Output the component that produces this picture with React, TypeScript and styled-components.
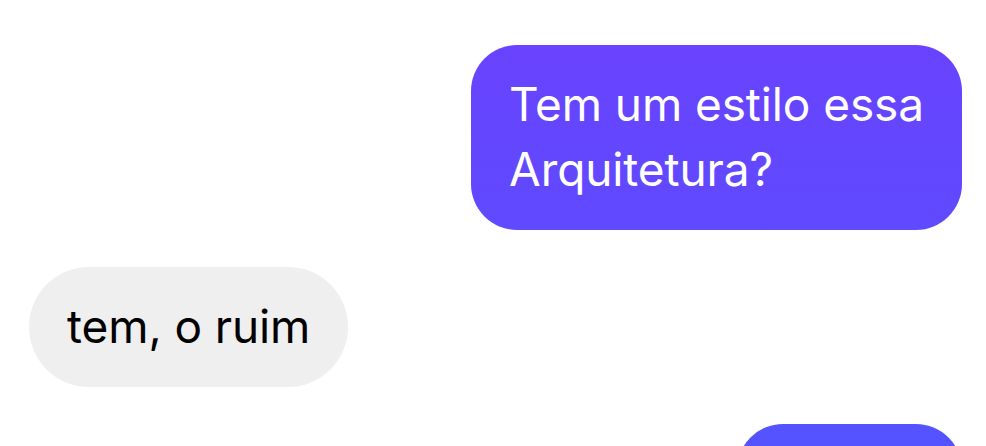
import styled, { createGlobalStyle } from "styled-components";

const GlobalStyle = createGlobalStyle`
  html, body {
    margin: 0;
    padding: 0;
    background: #ffffff;
    overflow: hidden;
  }
  body {
    font-family: "Inter", "Noto Sans", sans-serif;
  }
`;

const Thread = styled.div`
  display: flex;
  flex-direction: column;
  row-gap: 37px;
  padding: 45px 24px 0 29px;
  height: 446px;
  box-sizing: border-box;
  overflow: hidden;
`;

const Row = styled.div<{ $mine?: boolean }>`
  display: flex;
  justify-content: ${({ $mine }) => ($mine ? "flex-end" : "flex-start")};
`;

const Bubble = styled.div<{ $mine?: boolean; $width?: number }>`
  box-sizing: border-box;
  ${({ $width }) => ($width ? `width: ${$width}px;` : "")}
  padding: 27px 38px 28px;
  border-radius: ${({ $mine }) => ($mine ? "46px" : "60px")};
  font-size: 46px;
  line-height: 65px;
  letter-spacing: -0.1px;
  white-space: pre-line;
  color: ${({ $mine }) => ($mine ? "#ffffff" : "#000000")};
  background: ${({ $mine }) =>
    $mine ? "linear-gradient(180deg, #6b41ff 0px, #5453ff 446px)" : "#efefef"};
  background-attachment: ${({ $mine }) => ($mine ? "fixed" : "scroll")};
`;

const messages = [
  { mine: true, text: "Tem um estilo essa\nArquitetura?" },
  { mine: false, text: "tem, o ruim" },
  { mine: true, text: "Sério?", width: 225 },
];

export default function App() {
  return (
    <>
      <GlobalStyle />
      <Thread>
        {messages.map((m, i) => (
          <Row key={i} $mine={m.mine}>
            <Bubble $mine={m.mine} $width={m.width}>
              {m.text}
            </Bubble>
          </Row>
        ))}
      </Thread>
    </>
  );
}
